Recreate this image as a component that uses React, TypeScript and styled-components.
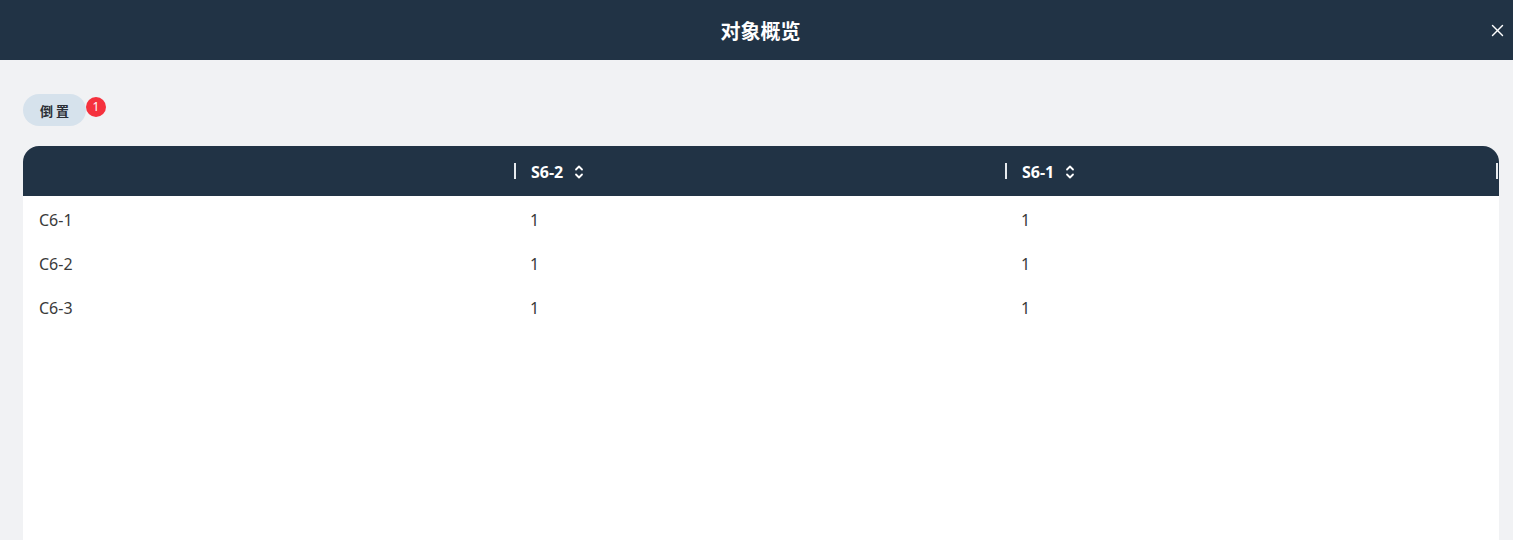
import * as React from 'react'
import styled, { createGlobalStyle } from 'styled-components'

const GlobalStyle = createGlobalStyle`
    html, body {
        margin: 0;
        padding: 0;
        background: #f1f2f4;
        font-family: "Noto Sans", "Noto Sans CJK SC", sans-serif;
        overflow: hidden;
    }
`

const Page = styled('div')`
    display: flex;
    flex-flow: column nowrap;
    width: 1513px;
    height: 540px;
    background: #f1f2f4;
`

const TopBar = styled('div')`
    position: relative;
    display: flex;
    justify-content: center;
    align-items: center;
    height: 60px;
    padding-left: 8px;
    background: #213345;
    color: #fff;
    font-size: 20px;
    font-weight: 700;
    flex-shrink: 0;
`

const CloseButton = styled('button')`
    position: absolute;
    right: 8px;
    top: 22px;
    width: 16px;
    height: 16px;
    padding: 0;
    border: 0;
    background: none;
    display: flex;
    align-items: center;
    justify-content: center;
    cursor: pointer;
`

const Body = styled('div')`
    display: flex;
    flex-flow: column nowrap;
    flex: 1;
    padding: 34px 14px 0 23px;
    min-height: 0;
`

const Toolbar = styled('div')`
    display: flex;
    align-items: center;
    height: 32px;
    margin-bottom: 20px;
`

const PillWrap = styled('div')`
    position: relative;
    display: inline-flex;
`

const Pill = styled('button')`
    height: 32px;
    width: 63px;
    border: 0;
    border-radius: 16px;
    background: #d6e2ec;
    color: #2a2f36;
    font-family: "Noto Sans", "Noto Sans CJK SC", sans-serif;
    font-size: 13px;
    font-weight: 700;
    letter-spacing: 3px;
    padding: 0 0 0 3px;
    cursor: pointer;
`

const Badge = styled('span')`
    position: absolute;
    left: 63px;
    top: 3px;
    width: 20px;
    height: 20px;
    border-radius: 50%;
    background: #f5313d;
    color: #fff;
    font-size: 12px;
    line-height: 20px;
    text-align: center;
`

const Table = styled('div')`
    flex: 1;
    display: flex;
    flex-flow: column nowrap;
    background: #fff;
    border-radius: 16px 16px 0 0;
    overflow: hidden;
`

const HeadRow = styled('div')`
    display: grid;
    grid-template-columns: 491px 491px 491px 3px;
    height: 50px;
    background: #213345;
`

const HeadCell = styled('div')<{ divider?: boolean }>`
    position: relative;
    display: flex;
    align-items: center;
    gap: 11px;
    padding-left: ${p => (p.divider ? '17px' : '16px')};
    padding-top: 1px;
    color: #fff;
    font-size: 16px;
    font-weight: 700;

    &::before {
        content: '';
        display: ${p => (p.divider ? 'block' : 'none')};
        position: absolute;
        left: 0;
        top: 17px;
        width: 2px;
        height: 16px;
        background: #e6eaee;
    }
`

const Row = styled('div')`
    display: grid;
    grid-template-columns: 491px 491px 491px 3px;
    height: 44px;
`

const Cell = styled('div')`
    display: flex;
    align-items: center;
    padding-left: 16px;
    padding-top: 3px;
    color: #3a3a3a;
    font-size: 16px;
`

const SortIcon = () => (
    <svg width="10" height="16" viewBox="0 0 10 16" fill="none" stroke="#fff" strokeWidth="1.8" strokeLinecap="round" strokeLinejoin="round">
        <path d="M2 5.5 L5 2.5 L8 5.5" />
        <path d="M2 10.5 L5 13.5 L8 10.5" />
    </svg>
)

const columns = ['S6-2', 'S6-1']
const rows = [
    { name: 'C6-1', values: ['1', '1'] },
    { name: 'C6-2', values: ['1', '1'] },
    { name: 'C6-3', values: ['1', '1'] },
]

export default function App() {
    return (
        <Page>
            <GlobalStyle />
            <TopBar>
                对象概览
                <CloseButton aria-label="close">
                    <svg width="13" height="13" viewBox="0 0 13 13" stroke="#fff" strokeWidth="1.4" strokeLinecap="round">
                        <path d="M1.5 1.5 L11.5 11.5" />
                        <path d="M11.5 1.5 L1.5 11.5" />
                    </svg>
                </CloseButton>
            </TopBar>
            <Body>
                <Toolbar>
                    <PillWrap>
                        <Pill>倒置</Pill>
                        <Badge>1</Badge>
                    </PillWrap>
                </Toolbar>
                <Table>
                    <HeadRow>
                        <HeadCell />
                        {columns.map(c => (
                            <HeadCell key={c} divider={true}>
                                {c}
                                <SortIcon />
                            </HeadCell>
                        ))}
                        <HeadCell divider={true} style={{ padding: 0 }} />
                    </HeadRow>
                    {rows.map(r => (
                        <Row key={r.name}>
                            <Cell>{r.name}</Cell>
                            {r.values.map((v, i) => (
                                <Cell key={i}>{v}</Cell>
                            ))}
                        </Row>
                    ))}
                </Table>
            </Body>
        </Page>
    )
}
